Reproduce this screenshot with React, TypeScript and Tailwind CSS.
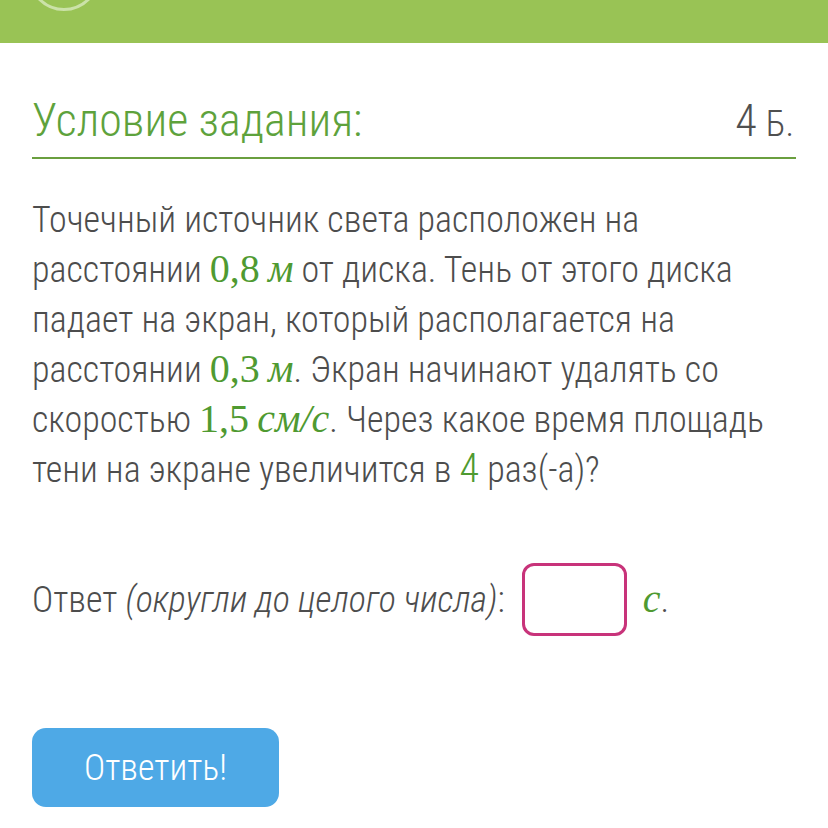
import React from "react";

const serif = { fontFamily: '"Liberation Serif", "Times New Roman", serif', fontWeight: 400 };

const M = ({ children, italic }: { children: React.ReactNode; italic?: boolean }) => (
  <span className={`text-[#4f9a31] text-[40px] leading-[40px] ${italic ? "italic" : ""}`} style={serif}>
    {children}
  </span>
);

export default function App() {
  return (
    <div
      className="w-[828px] h-[828px] bg-white overflow-hidden relative font-light"
      style={{ fontFamily: '"Roboto Condensed", Roboto, sans-serif', fontWeight: 300 }}
    >
      <div className="h-[43px] bg-[#99c355] relative overflow-hidden">
        <div className="absolute left-[28px] top-[-61px] w-[72px] h-[72px] rounded-full border-[3px] border-[#cbe2a8]" />
      </div>
      <div className="px-[32px]">
        <div className="pt-[51px] pb-[11px] border-b-2 border-[#6a9f3f]">
          <div className="h-[52px] flex items-baseline justify-between">
            <div className="text-[46px] leading-[52px] text-[#5ea23c]">Условие задания:</div>
            <div className="flex items-baseline text-[#505050] leading-[52px] pr-[2px]">
              <span className="text-[44px] leading-[52px]">4</span>
              <span className="text-[36px] leading-[52px] ml-[9px]">Б.</span>
            </div>
          </div>
        </div>
        <p className="mt-[36px] text-[36px] leading-[50px] text-[#4d4d4d]">
          Точечный источник света расположен на
          <br />
          расстоянии <M>0,8</M> <M italic>м</M> от диска. Тень от этого диска
          <br />
          падает на экран, который располагается на
          <br />
          расстоянии <M>0,3</M> <M italic>м</M>. Экран начинают удалять со
          <br />
          скоростью <M>1,5</M> <M italic>см/с</M>. Через какое время площадь
          <br />
          тени на экране увеличится в <span className="text-[#4f9a31] text-[40px] leading-[40px]">4</span> раз(-а)?
        </p>
        <div className="mt-[68px] flex items-center text-[36px] text-[#4d4d4d]">
          <span>
            Ответ <span className="italic">(округли до целого числа)</span>:
          </span>
          <div className="ml-[17px] w-[105px] h-[73px] rounded-[12px] border-[3px] border-[#c8337a] bg-white" />
          <span className="ml-[16px]">
            <M italic>с</M>.
          </span>
        </div>
        <button
          className="mt-[92px] w-[247px] h-[79px] rounded-[14px] bg-[#4ea9e6] text-white text-[36px] block"
          style={{ fontFamily: '"Roboto Condensed", Roboto, sans-serif', fontWeight: 300 }}
        >
          Ответить!
        </button>
      </div>
    </div>
  );
}
